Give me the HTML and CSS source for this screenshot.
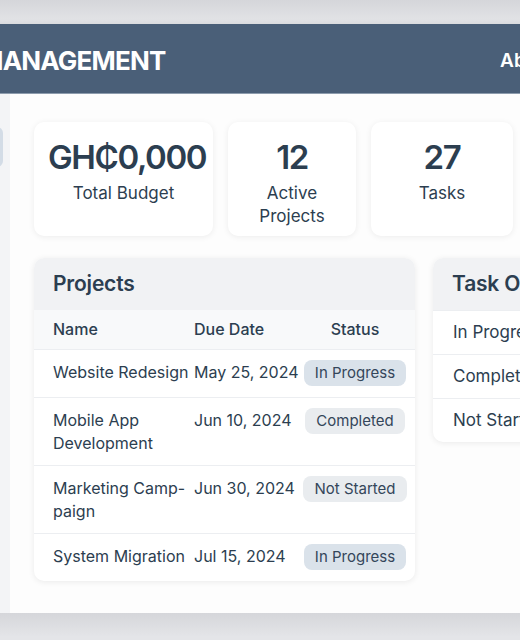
FILE: index.html
```html
<!DOCTYPE html>
<html lang="en">
<head>
    <meta charset="UTF-8">
    <meta name="viewport" content="width=device-width, initial-scale=1.0">
    <title>Project Management</title>
    <link rel="stylesheet" href="styles.css">
</head>
<body>
    <div class="window">
        <header class="topbar">
            <h1 class="brand">PROJECT MANAGEMENT</h1>
            <nav class="topnav">
                <a href="#">About</a>
                <a href="#">Settings</a>
            </nav>
        </header>
        <div class="layout">
            <aside class="sidebar">
                <a class="nav-item active" href="#">Dashboard</a>
            </aside>
            <main class="main">
                <div class="stats">
                    <div class="stat-card">
                        <div class="stat-value">GH₵0,000</div>
                        <div class="stat-label">Total Budget</div>
                    </div>
                    <div class="stat-card">
                        <div class="stat-value">12</div>
                        <div class="stat-label">Active Projects</div>
                    </div>
                    <div class="stat-card">
                        <div class="stat-value">27</div>
                        <div class="stat-label">Tasks</div>
                    </div>
                    <div class="stat-card">
                        <div class="stat-value">5</div>
                        <div class="stat-label">Team</div>
                    </div>
                </div>
                <div class="panels">
                    <section class="panel">
                        <h2 class="panel-title">Projects</h2>
                        <table class="projects">
                            <colgroup>
                                <col class="w-name">
                                <col class="w-date">
                                <col>
                            </colgroup>
                            <thead>
                                <tr>
                                    <th class="col-name">Name</th>
                                    <th class="col-date">Due Date</th>
                                    <th class="col-status">Status</th>
                                </tr>
                            </thead>
                            <tbody>
                                <tr>
                                    <td class="col-name">Website Redesign</td>
                                    <td class="col-date">May 25, 2024</td>
                                    <td class="col-status"><span class="badge progress">In Progress</span></td>
                                </tr>
                                <tr>
                                    <td class="col-name">Mobile App Development</td>
                                    <td class="col-date">Jun 10, 2024</td>
                                    <td class="col-status"><span class="badge">Completed</span></td>
                                </tr>
                                <tr>
                                    <td class="col-name">Marketing Camp-paign</td>
                                    <td class="col-date">Jun 30, 2024</td>
                                    <td class="col-status"><span class="badge">Not Started</span></td>
                                </tr>
                                <tr>
                                    <td class="col-name">System Migration</td>
                                    <td class="col-date">Jul 15, 2024</td>
                                    <td class="col-status"><span class="badge progress">In Progress</span></td>
                                </tr>
                            </tbody>
                        </table>
                    </section>
                    <section class="panel">
                        <h2 class="panel-title">Task Overview</h2>
                        <ul class="task-list">
                            <li>In Progress <span>14</span></li>
                            <li>Completed <span>9</span></li>
                            <li>Not Started <span>4</span></li>
                        </ul>
                    </section>
                </div>
            </main>
        </div>
    </div>
</body>
</html>
```

FILE: styles.css
```css
body {
    margin: 0;
    font-family: Inter, "Noto Sans", sans-serif;
    color: #2c3e50;
    background: linear-gradient(#d5d6da, #e4e5e8 24px, #e4e5e8 600px, #cbccd0 613px, #e2e3e6);
    overflow: hidden;
}
.window {
    margin: 24px 0 0 -190px;
    width: 900px;
    height: 589px;
    background-color: #fdfdfd;
    box-shadow: 0 3px 8px rgba(0, 0, 0, 0.18);
}
.topbar {
    display: flex;
    align-items: center;
    height: 65px;
    padding-top: 4px;
    background-color: #4a5f78;
    border-bottom: 1px solid #8d9cad;
    color: #fff;
}
.brand {
    margin: 0;
    padding-left: 48px;
    font-size: 26px;
    font-weight: 700;
    letter-spacing: -0.8px;
    white-space: nowrap;
}
.topnav {
    display: flex;
    gap: 30px;
    margin-left: auto;
    padding-right: 49px;
}
.topnav a {
    color: #fff;
    text-decoration: none;
    font-size: 19px;
    font-weight: 600;
}
.layout {
    display: flex;
    height: 519px;
}
.sidebar {
    flex-shrink: 0;
    width: 193px;
    padding: 33px 7px 0 0;
    background-color: #f3f4f6;
}
.nav-item {
    display: block;
    height: 40px;
    line-height: 40px;
    padding-left: 20px;
    border-radius: 0 6px 6px 0;
    color: #2c3e50;
    text-decoration: none;
}
.nav-item.active {
    background-color: #d3dce6;
}
.main {
    flex: 1;
    min-width: 0;
    padding: 28px 24px 0 24px;
}
.stats {
    display: grid;
    grid-template-columns: 179px 128px 142px 1fr;
    gap: 15px;
}
.stat-card {
    height: 114px;
    box-sizing: border-box;
    padding: 16px 14px 0 14px;
    background-color: #fff;
    border-radius: 10px;
    box-shadow: 0 1px 6px rgba(0, 0, 0, 0.07);
    text-align: center;
}
.stat-value {
    font-size: 33px;
    line-height: 38px;
    font-weight: 600;
    letter-spacing: -1.4px;
    white-space: nowrap;
}
.stat-label {
    margin-top: 6px;
    font-size: 17px;
    line-height: 23px;
}
.panels {
    display: grid;
    grid-template-columns: 381px 1fr;
    gap: 18px;
    align-items: start;
    margin-top: 22px;
}
.panel {
    background-color: #fff;
    border-radius: 10px;
    box-shadow: 0 1px 6px rgba(0, 0, 0, 0.08);
    overflow: hidden;
}
.panel-title {
    margin: 0;
    height: 52px;
    line-height: 52px;
    padding-left: 19px;
    background-color: #f1f2f4;
    font-size: 21px;
    font-weight: 600;
    letter-spacing: -0.2px;
    white-space: nowrap;
}
.projects {
    width: 100%;
    table-layout: fixed;
    border-collapse: collapse;
    font-size: 16px;
    line-height: 23px;
}
.w-name {
    width: 158px;
}
.w-date {
    width: 111px;
}
.projects th {
    padding: 8px 0;
    background-color: #f8f9fa;
    font-weight: 500;
    text-align: left;
}
.projects td {
    padding: 11px 0 10px 0;
    vertical-align: top;
    border-top: 1px solid #eceef1;
}
.projects .col-name {
    padding-left: 19px;
    padding-right: 3px;
}
.projects .col-date {
    padding-left: 2px;
    white-space: nowrap;
}
.projects .col-status {
    text-align: center;
    padding-right: 8px;
}
.projects td.col-status {
    padding-top: 10px;
    padding-bottom: 11px;
}
.badge {
    display: block;
    width: fit-content;
    margin: 0 auto;
    padding: 0 11px;
    line-height: 26px;
    font-size: 15px;
    white-space: nowrap;
    border-radius: 8px;
    background-color: #e9ecef;
    color: #34465a;
}
.badge.progress {
    background-color: #dae2ea;
}
.task-list {
    margin: 0;
    padding: 0;
    list-style: none;
    font-size: 17px;
    line-height: 23px;
}
.task-list li {
    display: flex;
    justify-content: space-between;
    padding: 10px 20px;
    border-top: 1px solid #eceef1;
}
```
